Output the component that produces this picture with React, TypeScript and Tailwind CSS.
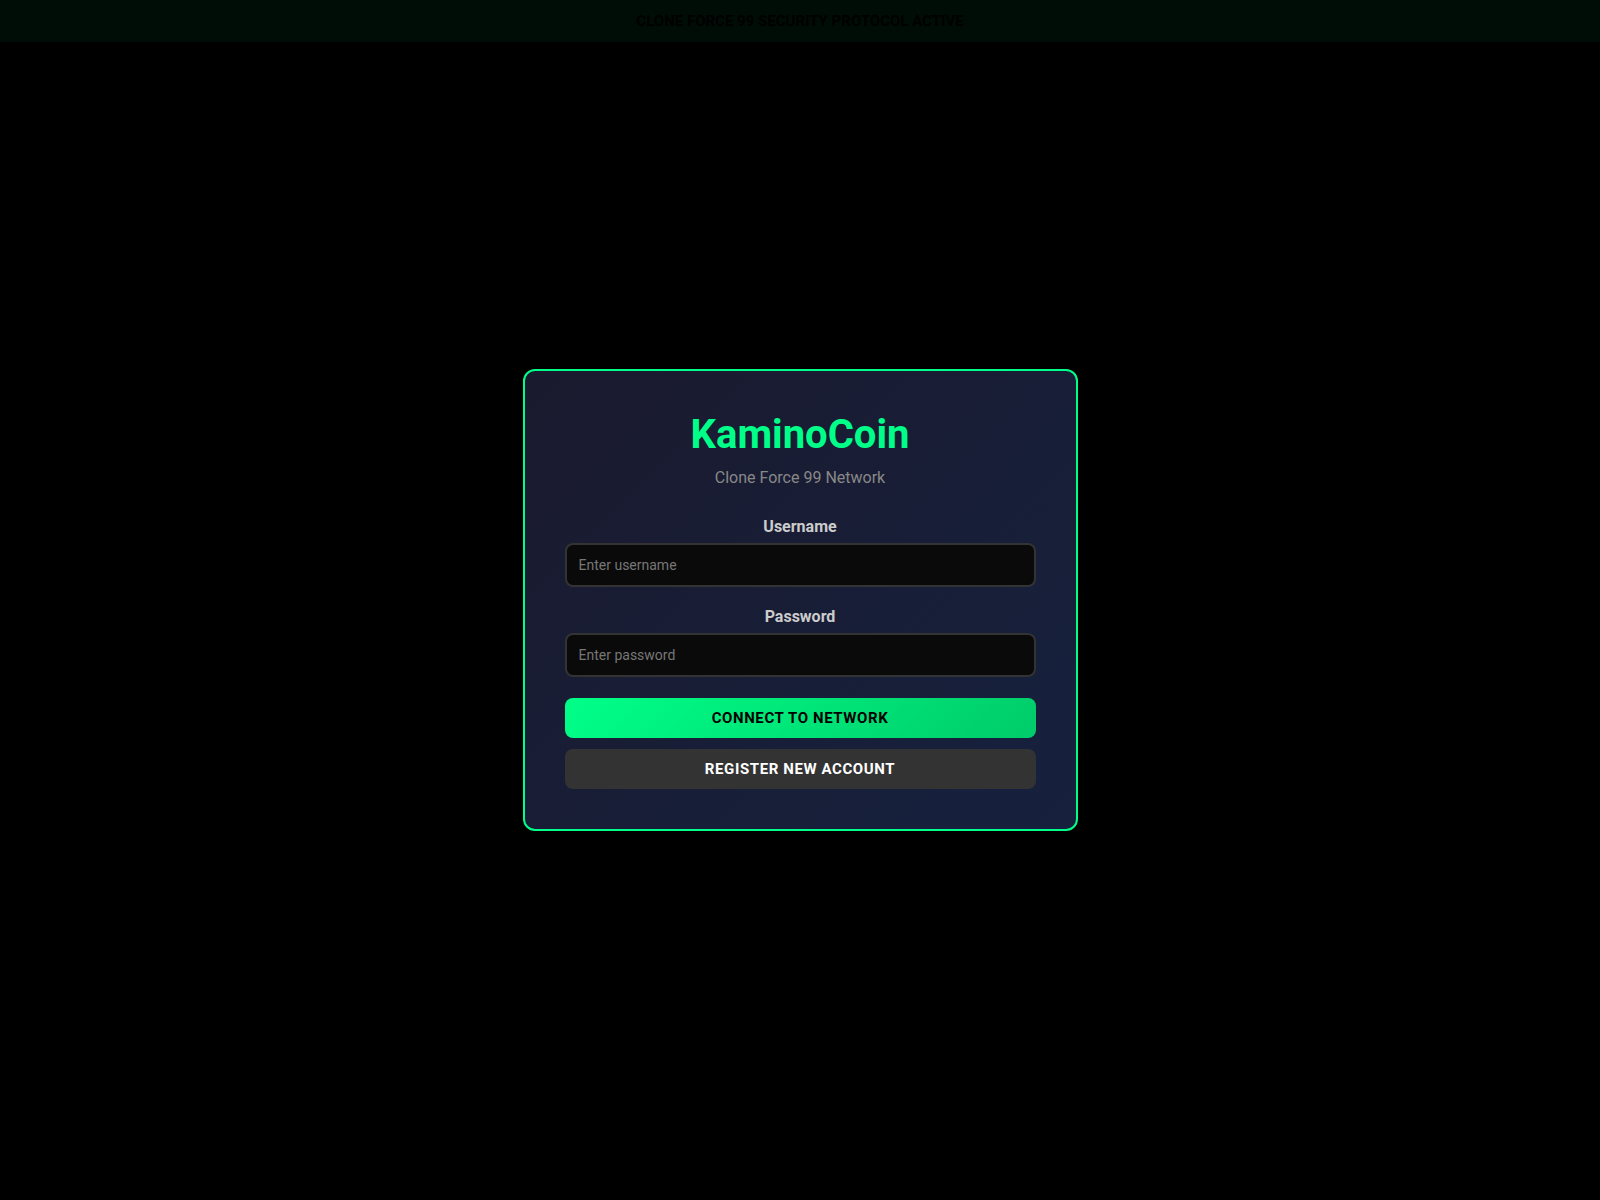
import React from 'react';

export default function App() {
  return (
    <div className="min-h-screen bg-black font-['Roboto','Liberation_Sans',sans-serif]">
      <div className="fixed top-0 left-0 right-0 h-[42px] bg-[#000d07] flex items-center justify-center">
        <p className="text-[15px] font-bold text-black uppercase">Clone Force 99 Security Protocol Active</p>
      </div>

      <div className="min-h-screen flex items-center justify-center">
        <div className="w-[555px] rounded-xl border-2 border-[#00ff88] bg-[linear-gradient(135deg,#1a1a2e,#16213e)] p-10">
          <h1 className="text-center text-[40px] leading-[47px] font-bold text-[#00ff88] mb-[10px]">KaminoCoin</h1>
          <p className="text-center text-[16px] leading-[19px] text-[#888] mb-[30px]">Clone Force 99 Network</p>

          <div className="mb-[20px]">
            <label className="block text-center text-[16px] leading-[19px] font-bold text-[#ccc] mb-[7px]">Username</label>
            <input
              type="text"
              placeholder="Enter username"
              className="w-full h-[44px] px-3 rounded-lg border-2 border-[#333] bg-[#0a0a0a] text-[14px] text-white placeholder:text-[#777] outline-none"
            />
          </div>

          <div className="mb-[21px]">
            <label className="block text-center text-[16px] leading-[19px] font-bold text-[#ccc] mb-[7px]">Password</label>
            <input
              type="password"
              placeholder="Enter password"
              className="w-full h-[44px] px-3 rounded-lg border-2 border-[#333] bg-[#0a0a0a] text-[14px] text-white placeholder:text-[#777] outline-none"
            />
          </div>

          <button className="w-full h-[40px] rounded-lg bg-[linear-gradient(135deg,#00ff88,#00cc6a)] text-black text-[15px] font-bold uppercase tracking-[0.6px] mb-[11px]">
            Connect to Network
          </button>
          <button className="w-full h-[40px] rounded-lg bg-[#333] text-white text-[15px] font-bold uppercase tracking-[0.6px]">
            Register New Account
          </button>
        </div>
      </div>
    </div>
  );
}
